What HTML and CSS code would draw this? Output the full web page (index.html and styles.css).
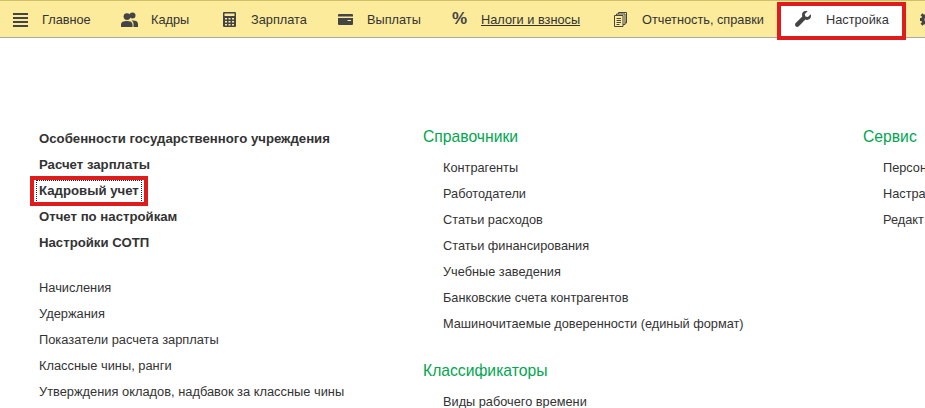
FILE: index.html
```html
<!DOCTYPE html>
<html lang="ru">
  <head>
    <meta charset="UTF-8" />
    <title>Настройка</title>
    <link rel="stylesheet" href="styles.css">
  </head>
  <body>
    <nav class="toolbar">
      <a class="tool tool_main">
        <svg class="icon" width="15" height="15" viewBox="0 0 15 15"><path d="M0 1h15v2H0zM0 5h15v2H0zM0 9h15v2H0zM0 13h15v2H0z"/></svg>
        <span>Главное</span>
      </a>
      <a class="tool tool_staff">
        <svg class="icon" width="17" height="15" viewBox="0 0 17 15"><circle cx="6" cy="4.6" r="3.4"/><circle cx="11.5" cy="3.4" r="3"/><path d="M0 15v-2.500C0 10 2.500 9 6 9s5.500 1 5.500 3.500V15zM12.500 15v-3c0-1.500-.7-2.600-2-3.400 .5-.1 1-.1 1.500-.1 3 0 5 1 5 3.500V15z"/></svg>
        <span>Кадры</span>
      </a>
      <a class="tool tool_salary">
        <svg class="icon" width="13" height="15" viewBox="0 0 13 15"><path fill-rule="evenodd" d="M0 1q0-1 1-1h11q1 0 1 1v13q0 1-1 1H1q-1 0-1-1zM1.500 1.500v2.500h10V1.500zM2 6v1.500h2V6zM5.500 6v1.500h2V6zM9 6v1.500h2V6zM2 9v1.500h2V9zM5.500 9v1.500h2V9zM9 9v1.500h2V9zM2 12v1.500h2V12zM5.500 12v1.500h2V12zM9 12v1.500h2V12z"/></svg>
        <span>Зарплата</span>
      </a>
      <a class="tool tool_pay">
        <svg class="icon" width="15" height="11" viewBox="0 0 15 11"><path fill-rule="evenodd" d="M1 0h13q1 0 1 1v1.500H0V1q0-1 1-1zM0 4h15v6q0 1-1 1H1q-1 0-1-1zM9.500 6v1h3.500V6z"/></svg>
        <span>Выплаты</span>
      </a>
      <a class="tool tool_tax">
        <span class="percent">%</span>
        <span class="link">Налоги и взносы</span>
      </a>
      <a class="tool tool_reports">
        <svg class="icon icon_outline" width="13" height="15" viewBox="0 0 13 15"><path d="M.5 3.500h8.500v11H.5zM2.500 3.500V2h8.500v10.500H9M4.500 2V.5h8v10.500H11M2.500 6.500h4.500M2.500 8.500h4.500M2.500 10.500h4.500M2.500 12.500h3"/></svg>
        <span>Отчетность, справки</span>
      </a>
      <a class="tool tool_settings">
        <svg class="icon" width="16" height="16" viewBox="0 0 16 16"><path d="M15.700 3.300l-2.800 2.800-2.500-.6-.6-2.500L12.600.2C10.500-.5 8.400.2 7.500 1.800 6.900 3 6.900 4.300 7.300 5.500L.7 12.100c-.9.9-.9 2.200 0 3.100s2.200.9 3.100 0l6.600-6.600c1.200.5 2.600.4 3.700-.3 1.700-1 2.300-3 1.600-5z"/></svg>
        <span>Настройка</span>
      </a>
      <a class="tool tool_admin">
        <svg class="icon" width="14" height="14" viewBox="0 0 14 14"><path fill-rule="evenodd" d="M5.500 0h3v2l1.500.7L11.500 1.300l2 2L12 4.800l.6 1.200H14v3h-1.400l-.6 1.300 1.500 1.500-2 2L10 12.200l-1.500.6V14h-3v-1.200L4 12.200l-1.500 1.600-2-2L2 10.300 1.400 9H0V6h1.400L2 4.800.5 3.300l2-2L4 2.700l1.500-.7zM7 5a2.500 2.500 0 1 0 0 5 2.500 2.500 0 0 0 0-5z"/></svg>
      </a>
    </nav>

    <main class="content">
      <section class="column column_main">
        <ul class="list list_bold">
          <li>Особенности государственного учреждения</li>
          <li>Расчет зарплаты</li>
          <li><span class="focused">Кадровый учет</span></li>
          <li>Отчет по настройкам</li>
          <li>Настройки СОТП</li>
        </ul>
        <ul class="list list_plain">
          <li>Начисления</li>
          <li>Удержания</li>
          <li>Показатели расчета зарплаты</li>
          <li>Классные чины, ранги</li>
          <li>Утверждения окладов, надбавок за классные чины</li>
        </ul>
      </section>

      <section class="column column_refs">
        <h2 class="group_title">Справочники</h2>
        <ul class="list list_group">
          <li>Контрагенты</li>
          <li>Работодатели</li>
          <li>Статьи расходов</li>
          <li>Статьи финансирования</li>
          <li>Учебные заведения</li>
          <li>Банковские счета контрагентов</li>
          <li>Машиночитаемые доверенности (единый формат)</li>
        </ul>
        <h2 class="group_title group_next">Классификаторы</h2>
        <ul class="list list_group">
          <li>Виды рабочего времени</li>
        </ul>
      </section>

      <section class="column column_service">
        <h2 class="group_title">Сервис</h2>
        <ul class="list list_group">
          <li>Персон</li>
          <li>Настра</li>
          <li>Редакт</li>
        </ul>
      </section>
    </main>
  </body>
</html>
```

FILE: styles.css
```css
html,
body {
  margin: 0;
  height: 408px;
  overflow: hidden;
  background-color: #fff;
}
body {
  width: 925px;
  font-family: "Liberation Sans", Arial, sans-serif;
  font-size: 12.75px;
  color: #333;
}
ul {
  margin: 0;
  padding: 0;
  list-style: none;
}

/* top section panel */
.toolbar {
  display: flex;
  align-items: center;
  box-sizing: border-box;
  height: 38px;
  background-color: #fbeb9b;
  border-top: 1px solid #d0bf6a;
  border-bottom: 1px solid #a9a9a9;
  white-space: nowrap;
}
.tool {
  display: flex;
  align-items: center;
  flex: none;
  color: #333;
}
.icon {
  flex: none;
  fill: #444;
}
.icon_outline {
  fill: none;
  stroke: #444;
}
.tool_main { margin-left: 13px; gap: 14px; width: 108px; }
.tool_staff { gap: 13px; width: 102px; }
.tool_salary { gap: 15px; width: 115px; }
.tool_pay { gap: 14px; width: 114px; }
.tool_tax { gap: 13px; width: 162px; }
.tool_reports { gap: 15px; width: 181px; }
.tool_settings {
  position: relative;
  gap: 15px;
  width: 125px;
  height: 36px;
  z-index: 1;
}
.tool_settings::before {
  content: "";
  position: absolute;
  left: -18px;
  top: 1px;
  width: 129px;
  height: 38px;
  box-sizing: border-box;
  border: 4px solid #e01b1b;
  background-color: #fff;
  z-index: -1;
}
.percent {
  width: 16px;
  font-size: 17px;
  font-weight: 700;
  color: #444;
}
.link {
  text-decoration: underline;
}

/* columns */
.content {
  display: flex;
  padding-top: 88px;
}
.column {
  flex: none;
}
.column_main {
  width: 384px;
  padding-left: 39px;
  margin-top: -1px;
}
.column_refs {
  width: 440px;
}
.column_service {
  width: 62px;
}
.list li {
  height: 26px;
  line-height: 26px;
  white-space: nowrap;
}
.list_bold {
  padding-top: 1px;
  font-size: 13.2px;
  font-weight: 700;
}
.list_plain {
  margin-top: 19px;
  font-size: 12.85px;
}
.list_group {
  margin-top: 7px;
  padding-left: 20px;
}
.group_title {
  margin: 0;
  height: 22px;
  line-height: 22px;
  font-size: 15.7px;
  font-weight: 400;
  color: #00a650;
}
.group_next {
  margin-top: 23px;
}
.focused {
  position: relative;
  display: inline-block;
  line-height: 20px;
}
.focused::before {
  content: "";
  position: absolute;
  left: -3px;
  right: -3px;
  top: -1px;
  bottom: -2px;
  border: 1px dotted #222;
}
.focused::after {
  content: "";
  position: absolute;
  left: -9px;
  right: -9px;
  top: -5px;
  bottom: -5px;
  border: 4px solid #e01b1b;
}
```
